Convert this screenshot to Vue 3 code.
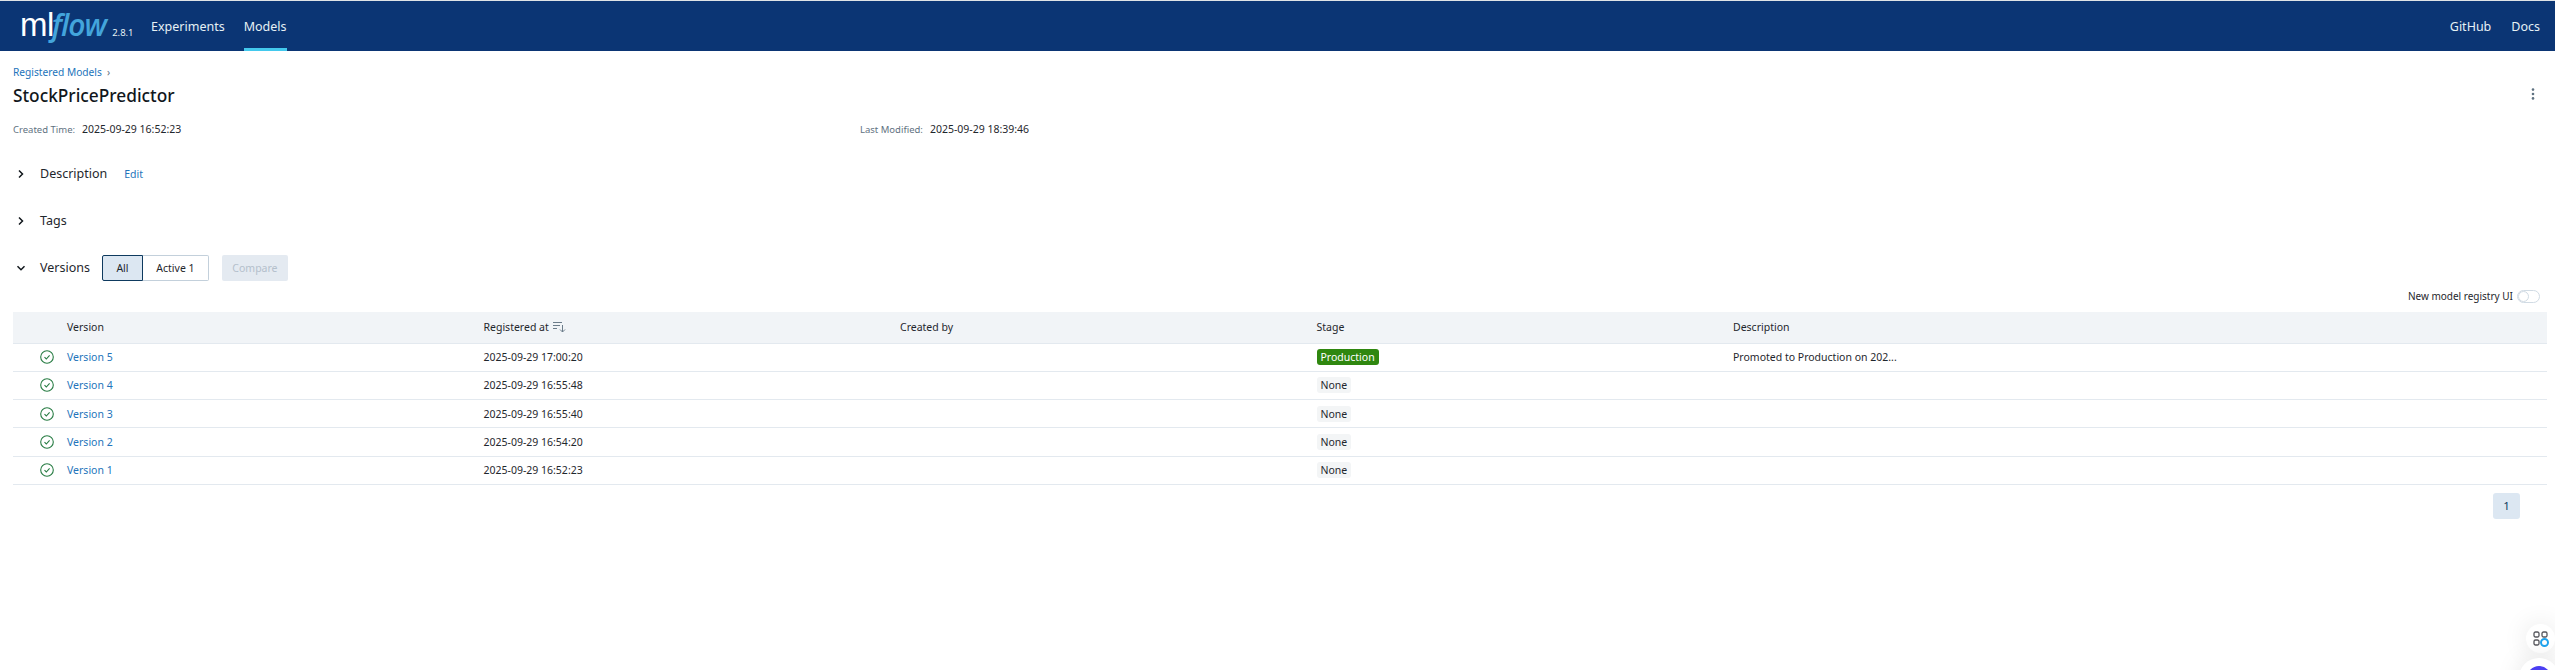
<script setup>
const rows = [
  { name: 'Version 5', date: '2025-09-29 17:00:20', stage: 'Production', desc: 'Promoted to Production on 202...' },
  { name: 'Version 4', date: '2025-09-29 16:55:48', stage: 'None', desc: '' },
  { name: 'Version 3', date: '2025-09-29 16:55:40', stage: 'None', desc: '' },
  { name: 'Version 2', date: '2025-09-29 16:54:20', stage: 'None', desc: '' },
  { name: 'Version 1', date: '2025-09-29 16:52:23', stage: 'None', desc: '' },
]
</script>

<template>
  <div class="page">
    <header class="topbar">
      <div class="logo"><span class="ml">ml</span><span class="flow">flow</span><span class="ver">2.8.1</span></div>
      <nav class="nav">
        <a class="nav-item">Experiments</a>
        <a class="nav-item active">Models</a>
      </nav>
      <div class="nav right">
        <a class="nav-item">GitHub</a>
        <a class="nav-item">Docs</a>
      </div>
    </header>

    <main class="main">
      <div class="crumb"><a class="link">Registered Models</a><span class="sep">›</span></div>
      <div class="title-row">
        <h1 class="title">StockPricePredictor</h1>
        <svg class="kebab" width="4" height="12" viewBox="0 0 4 12"><circle cx="2" cy="1.6" r="1.3"/><circle cx="2" cy="6" r="1.3"/><circle cx="2" cy="10.4" r="1.3"/></svg>
      </div>
      <div class="meta">
        <div class="meta-item"><span class="meta-label">Created Time:</span><span class="meta-value">2025-09-29 16:52:23</span></div>
        <div class="meta-item"><span class="meta-label">Last Modified:</span><span class="meta-value">2025-09-29 18:39:46</span></div>
      </div>

      <section class="section first">
        <svg class="chev" width="10" height="10" viewBox="0 0 10 10"><path d="M3 1.5 6.5 5 3 8.500"/></svg>
        <span class="sec-title">Description</span>
        <a class="link edit">Edit</a>
      </section>
      <section class="section">
        <svg class="chev" width="10" height="10" viewBox="0 0 10 10"><path d="M3 1.5 6.5 5 3 8.500"/></svg>
        <span class="sec-title">Tags</span>
      </section>
      <section class="section">
        <svg class="chev" width="10" height="10" viewBox="0 0 10 10"><path d="M1.500 3.200 5 6.700 8.500 3.200"/></svg>
        <span class="sec-title">Versions</span>
        <div class="seg">
          <button class="seg-btn on">All</button>
          <button class="seg-btn off">Active 1</button>
        </div>
        <button class="compare">Compare</button>
      </section>

      <div class="toggle-row">
        <span>New model registry UI</span>
        <span class="toggle"><span class="knob"></span></span>
      </div>

      <div class="table">
        <div class="row head">
          <div></div>
          <div>Version</div>
          <div class="sort-cell">Registered at
            <svg width="13" height="12" viewBox="0 0 13 12" class="sort"><path d="M0 1.500h9M0 4.500h7M0 7.500h4M9.500 4v7M7 8.500l2.500 2.500 2.500-2.500"/></svg>
          </div>
          <div>Created by</div>
          <div>Stage</div>
          <div>Description</div>
        </div>
        <div v-for="r in rows" :key="r.name" class="row">
          <div class="status">
            <svg width="14" height="14" viewBox="0 0 14 14"><circle cx="7" cy="7" r="6.300"/><path d="M4.500 7.200 6.300 9 9.600 5.400"/></svg>
          </div>
          <div><a class="link">{{ r.name }}</a></div>
          <div>{{ r.date }}</div>
          <div></div>
          <div><span class="badge" :class="r.stage === 'Production' ? 'prod' : 'none'">{{ r.stage }}</span></div>
          <div>{{ r.desc }}</div>
        </div>
      </div>

      <div class="pager"><span class="page-num">1</span></div>
    </main>

    <div class="float one">
      <svg width="16" height="16" viewBox="0 0 16 16">
        <g fill="none" stroke="#55565c" stroke-width="1.300">
          <rect x="1" y="1" width="5" height="5" rx="1.500"/>
          <rect x="9" y="1" width="5" height="5" rx="1.500"/>
          <rect x="1" y="9" width="5" height="5" rx="1.500"/>
        </g>
        <circle cx="11.500" cy="11.500" r="3.500" fill="none" stroke="#1ea3ee" stroke-width="2"/>
      </svg>
    </div>
    <div class="float two"><span class="ring"></span></div>
  </div>
</template>

<style>
html, body { margin: 0; background: #fff; }
</style>

<style scoped>
.page {
  position: relative;
  width: 2555px;
  height: 670px;
  overflow: hidden;
  background: #fff;
  color: #1f272d;
  font-family: "Noto Sans", "Open Sans", sans-serif;
  font-size: 10.500px;
}
.topbar {
  box-sizing: border-box;
  height: 51px;
  border-top: 1px solid #dfe3e6;
  background: #0b3574;
  display: flex;
  align-items: stretch;
  padding-left: 20px;
  padding-right: 15px;
}
.logo { display: flex; align-items: baseline; width: 131px; line-height: 50px; height: 50px; }
.ml { color: #fff; font-size: 33px; font-weight: 400; font-family: "Liberation Sans", sans-serif; letter-spacing: -0.500px; line-height: 48px; }
.flow { color: #43a5dc; font-size: 30px; font-weight: 600; font-style: italic; font-family: "Open Sans", sans-serif; letter-spacing: -1px; line-height: 48px; margin-left: -2px; }
.ver { color: #e6f1f5; font-size: 9.500px; margin-left: 6px; }
.nav { display: flex; gap: 19px; }
.nav.right { margin-left: auto; gap: 20px; }
.nav-item {
  box-sizing: border-box;
  height: 50px;
  line-height: 52px;
  color: #e6f1f5;
  font-size: 12.500px;
}
.active { border-bottom: 3px solid #43c9ed; }
.main { padding: 12px 8px 0 13px; }
.link { color: #2374bb; }
.crumb { height: 18px; line-height: 18px; font-size: 10.200px; display: flex; gap: 5px; }
.sep { color: #5f7281; }
.title-row { display: flex; justify-content: space-between; align-items: center; height: 26px; margin-top: 1px; }
.title { margin: 0; font-size: 17.300px; font-weight: 500; color: #11171c; }
.kebab { fill: #5f7281; margin-right: 12px; margin-top: -2px; }
.meta { display: grid; grid-template-columns: 847px 1fr; margin-top: 12px; height: 18px; line-height: 18px; }
.meta-item { display: flex; gap: 7px; align-items: baseline; }
.meta-label { color: #5f7281; font-size: 9.500px; white-space: nowrap; }
.section { display: flex; align-items: center; height: 47px; }
.first { margin-top: 12px; }
.chev { fill: none; stroke: #11171c; stroke-width: 1.500; margin-left: 3px; margin-right: 14px; flex: none; }
.sec-title { font-size: 12.500px; color: #1f272d; }
.edit { margin-left: 17px; font-size: 10.500px; }
.seg { display: flex; margin-left: 12px; }
.seg-btn {
  box-sizing: border-box;
  height: 26px;
  padding: 0;
  font: inherit;
  color: #1f272d;
  background: #fff;
  border-radius: 0;
}
.on { width: 41px; background: #dce7f2; border: 1px solid #0e3a5f; border-radius: 2px 0 0 2px; }
.off { width: 66px; border: 1px solid #c3d0db; border-left: 0; border-radius: 0 2px 2px 0; }
.compare {
  box-sizing: border-box;
  width: 66px;
  height: 26px;
  margin-left: 13px;
  border: 0;
  border-radius: 2px;
  font: inherit;
  background: #e4eaf1;
  color: #b4c0cc;
}
.toggle-row {
  box-sizing: border-box;
  display: flex;
  justify-content: flex-end;
  align-items: flex-start;
  gap: 4px;
  height: 23px;
  margin-top: -2px;
  padding-top: 1px;
  padding-right: 7px;
  font-size: 10px;
  line-height: 13px;
}
.toggle { box-sizing: border-box; width: 23px; height: 13px; border: 1px solid #d1dbe4; border-radius: 7px; display: block; }
.knob { display: block; box-sizing: border-box; width: 11px; height: 11px; border-radius: 50%; border: 1px solid #d1dbe4; background: #fff; }
.table { width: 2534px; }
.row {
  box-sizing: border-box;
  display: grid;
  grid-template-columns: 54px 416.500px 416.500px 416.500px 416.500px 1fr;
  align-items: center;
  height: 28.300px;
  border-bottom: 1px solid #e3e9ef;
}
.head { height: 31.500px; background: #f1f4f7; }
.sort-cell { display: flex; align-items: center; gap: 4px; }
.sort { fill: none; stroke: #6b7c8a; stroke-width: 1; }
.status { display: flex; justify-content: flex-start; padding-left: 27px; }
.status svg { fill: none; stroke: #277c43; stroke-width: 1.100; }
.badge { display: inline-block; height: 16px; line-height: 16px; padding: 0 4px; border-radius: 3px; }
.prod { background: #2f870f; color: #fff; }
.none { background: #f3f5f6; color: #1f272d; }
.pager { display: flex; justify-content: flex-end; margin-top: 8px; padding-right: 27px; }
.page-num {
  width: 27px;
  height: 26px;
  line-height: 26px;
  text-align: center;
  border-radius: 3px;
  background: #dce7f2;
  color: #0e3a5f;
  font-size: 11.500px;
}
.float {
  position: absolute;
  width: 29px;
  height: 29px;
  border-radius: 50%;
  background: #fff;
  box-shadow: 0 0 26px rgba(0, 0, 0, 0.10);
  display: flex;
  align-items: center;
  justify-content: center;
}
.one { left: 2526px; top: 624px; }
.two { left: 2519px; top: 658px; width: 40px; height: 40px; }
.ring { display: block; box-sizing: border-box; width: 24px; height: 24px; border-radius: 50%; border: 4px solid #4b3ff2; }
</style>
